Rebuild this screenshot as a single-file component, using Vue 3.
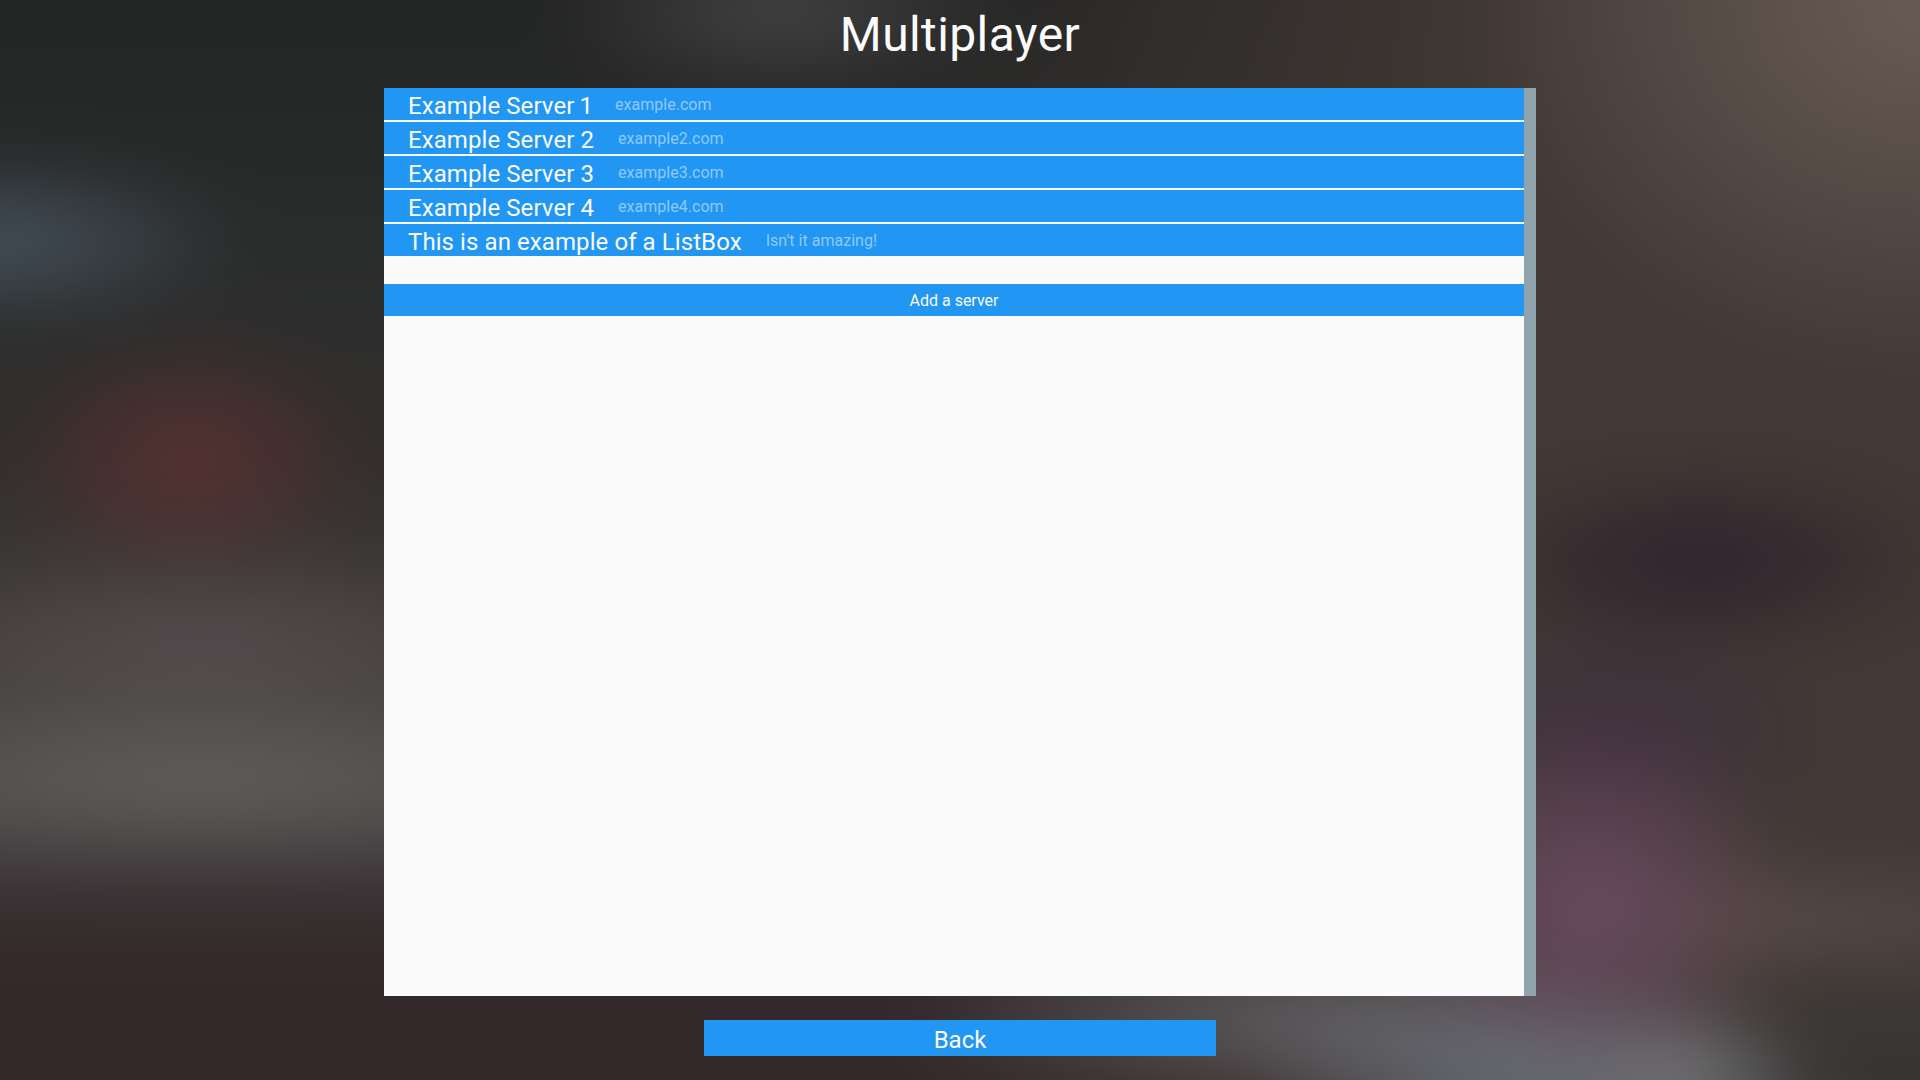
<script setup>
const servers = [
  { name: 'Example Server 1', host: 'example.com' },
  { name: 'Example Server 2', host: 'example2.com' },
  { name: 'Example Server 3', host: 'example3.com' },
  { name: 'Example Server 4', host: 'example4.com' },
  { name: 'This is an example of a ListBox', host: "Isn't it amazing!" },
]
</script>

<template>
  <div class="page">
    <div class="backdrop"></div>
    <h1 class="title">Multiplayer</h1>
    <main class="panel">
      <div class="content">
        <ul class="list">
          <li v-for="s in servers" :key="s.name" class="row">
            <span class="name">{{ s.name }}</span>
            <span class="host">{{ s.host }}</span>
          </li>
        </ul>
        <button class="add">Add a server</button>
      </div>
      <div class="scrollbar"></div>
    </main>
    <footer class="footer">
      <button class="back">Back</button>
    </footer>
  </div>
</template>

<style scoped>
.page {
  position: relative;
  width: 1920px;
  height: 1080px;
  overflow: hidden;
  display: flex;
  flex-direction: column;
  align-items: center;
  font-family: Roboto, "Liberation Sans", sans-serif;
  color: #fff;
  background: #33292a;
}
/* Soft blurred wallpaper: gradient coordinates are offset by the 100px overscan */
.backdrop {
  position: absolute;
  left: -100px;
  top: -100px;
  width: 2120px;
  height: 1280px;
  filter: blur(30px);
  background-image:
    radial-gradient(ellipse 190px 130px at 290px 558px, rgba(100, 50, 50, 0.75), rgba(100, 50, 50, 0) 100%),
    radial-gradient(ellipse 250px 85px at 100px 340px, rgba(72, 86, 98, 0.95), rgba(72, 86, 98, 0) 100%),
    radial-gradient(ellipse 270px 100px at 1800px 660px, rgba(44, 33, 43, 1), rgba(44, 33, 43, 0) 100%),
    radial-gradient(ellipse 120px 60px at 1780px 1180px, rgba(128, 128, 128, 0.8), rgba(128, 128, 128, 0) 100%),
    radial-gradient(ellipse 210px 190px at 1690px 1000px, rgba(106, 74, 96, 1), rgba(106, 74, 96, 0) 100%),
    radial-gradient(ellipse 230px 130px at 1720px 830px, rgba(62, 46, 62, 0.9), rgba(62, 46, 62, 0) 100%),
    radial-gradient(ellipse 300px 100px at 1640px 1180px, rgba(108, 116, 126, 1), rgba(108, 116, 126, 0) 100%),
    radial-gradient(ellipse 440px 80px at 1440px 1120px, rgba(100, 99, 104, 1), rgba(100, 99, 104, 0) 100%),
    radial-gradient(ellipse 400px 60px at 1900px 1020px, rgba(92, 80, 74, 0.85), rgba(92, 80, 74, 0) 100%),
    radial-gradient(ellipse 260px 110px at 2000px 1170px, rgba(56, 54, 52, 1) 40%, rgba(56, 54, 52, 0) 100%),
    radial-gradient(ellipse 450px 380px at 2020px 100px, rgba(106, 92, 86, 1), rgba(106, 92, 86, 0) 100%),
    radial-gradient(ellipse 680px 110px at 300px 880px, rgba(98, 98, 96, 1), rgba(98, 98, 96, 0) 100%),
    radial-gradient(ellipse 400px 110px at 300px 745px, rgba(96, 84, 88, 0.7), rgba(96, 84, 88, 0) 100%),
    radial-gradient(ellipse 240px 90px at 880px 110px, rgba(70, 69, 68, 1), rgba(70, 69, 68, 0) 100%),
    linear-gradient(90deg, rgba(66, 57, 53, 0) 1000px, rgba(66, 57, 53, 1) 1640px),
    linear-gradient(180deg, #232424 100px, #2c2d2d 400px, #312e2c 550px, #3f3c3a 750px, #3c3638 950px, #33292a 1060px, #33292a 1280px);
}
.title {
  position: relative;
  height: 88px;
  margin: 0;
  flex: none;
  font-size: 48px;
  font-weight: 400;
  letter-spacing: 0.4px;
  line-height: 70px;
  color: #fafafa;
}
.panel {
  position: relative;
  width: 1152px;
  height: 908px;
  flex: none;
  display: flex;
  background: #fafafa;
}
.content {
  flex: 1;
  min-width: 0;
}
.list {
  list-style: none;
  margin: 0 0 28px;
  padding: 0;
  display: flex;
  flex-direction: column;
  gap: 2px;
}
.row {
  height: 32px;
  padding-left: 24px;
  display: flex;
  align-items: flex-start;
  gap: 24px;
  background: #2196f3;
}
.name {
  font-size: 24px;
  line-height: 36px;
  letter-spacing: 0.08px;
  font-variant-numeric: proportional-nums;
  color: #fafafa;
  white-space: nowrap;
}
.host {
  font-size: 16px;
  line-height: 34px;
  letter-spacing: 0.03px;
  color: #90caf9;
  white-space: nowrap;
}
.add {
  display: block;
  width: 100%;
  height: 32px;
  padding: 1px 0 0;
  border: 0;
  background: #2196f3;
  color: #fafafa;
  font: 400 16px/31px Roboto, "Liberation Sans", sans-serif;
}
.scrollbar {
  width: 12px;
  flex: none;
  background: #90a4ae;
}
.footer {
  position: relative;
  padding-top: 24px;
}
.back {
  display: block;
  width: 512px;
  height: 36px;
  padding: 4px 0 0;
  border: 0;
  background: #2196f3;
  color: #fafafa;
  font: 400 24px/32px Roboto, "Liberation Sans", sans-serif;
}
</style>
